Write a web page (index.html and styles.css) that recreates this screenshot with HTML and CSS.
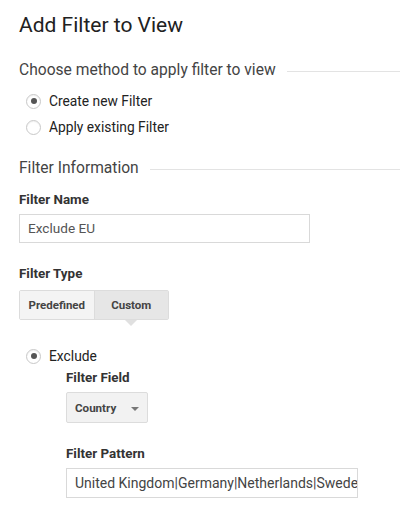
FILE: index.html
```html
<!DOCTYPE html>
<html>
<head>
<meta charset="utf-8">
<link rel="stylesheet" href="styles.css">
</head>
<body>
<div class="page">
  <h1 class="title">Add Filter to View</h1>

  <div class="section-head"><span>Choose method to apply filter to view</span><div class="rule"></div></div>
  <div class="radios">
    <label class="radio-row"><span class="radio checked"></span><span>Create new Filter</span></label>
    <label class="radio-row"><span class="radio"></span><span>Apply existing Filter</span></label>
  </div>

  <div class="section-head info"><span>Filter Information</span><div class="rule"></div></div>

  <div class="label first">Filter Name</div>
  <div class="input name">Exclude EU</div>

  <div class="label gap">Filter Type</div>
  <div class="tabs">
    <div class="tab">Predefined</div>
    <div class="tab active">Custom</div>
  </div>

  <div class="radios exclude">
    <label class="radio-row"><span class="radio checked"></span><span>Exclude</span></label>
  </div>
  <div class="sub">
    <div class="label tight">Filter Field</div>
    <div class="select"><span>Country</span><span class="caret"></span></div>
    <div class="label gap">Filter Pattern</div>
    <div class="input pattern"><span>United Kingdom|Germany|Netherlands|Sweden</span></div>
  </div>
</div>
</body>
</html>
```
FILE: styles.css
```css
html, body {
  margin: 0;
  padding: 0;
  background: #ffffff;
}
body {
  font-family: Roboto, "Liberation Sans", Arial, sans-serif;
  color: #222;
  width: 400px;
  height: 509px;
  overflow: hidden;
}
.page {
  padding: 13px 0 0 19px;
}
.title {
  margin: 0;
  font-size: 21px;
  line-height: 24px;
  font-weight: 400;
  color: #212121;
}
.section-head {
  display: flex;
  align-items: center;
  margin-top: 24px;
  font-size: 15.6px;
  line-height: 18px;
  color: #444;
}
.section-head.info {
  margin-top: 19px;
}
.section-head .rule {
  flex: 1;
  height: 1px;
  background: #e3e3e3;
  margin-left: 11px;
  margin-top: 2px;
}
.radios {
  margin-top: 9px;
  padding-left: 7px;
}
.radios.exclude {
  margin-top: 23px;
}
.radio-row {
  display: flex;
  align-items: center;
  height: 26px;
  font-size: 13.8px;
  color: #222;
}
.radio {
  box-sizing: border-box;
  width: 15px;
  height: 15px;
  border-radius: 50%;
  border: 1px solid #c8c8c8;
  background: #fff;
  box-shadow: inset 0 1px 1px rgba(0,0,0,0.06);
  margin-right: 8px;
  display: flex;
  align-items: center;
  justify-content: center;
}
.radio.checked::after {
  content: "";
  width: 6px;
  height: 6px;
  border-radius: 50%;
  background: #555;
}
.label {
  font-size: 13.4px;
  line-height: 16px;
  font-weight: 700;
  color: #333;
}
.label.first {
  margin-top: 15px;
}
.label.gap {
  margin-top: 23px;
}
.label.tight {
  margin-top: 1px;
}
.input {
  box-sizing: border-box;
  margin-top: 6px;
  height: 30px;
  border: 1px solid #d9d9d9;
  background: #fff;
  font-size: 13.6px;
  line-height: 28px;
  color: #555;
  padding: 0 9px 0 8px;
  overflow: hidden;
  white-space: nowrap;
}
.input.name {
  width: 291px;
  height: 29px;
  line-height: 27px;
}
.input.pattern {
  width: 292px;
  font-size: 14px;
  color: #444;
}
.tabs {
  display: flex;
  margin-top: 8px;
  width: 150px;
  height: 30px;
  box-sizing: border-box;
  border: 1px solid #dcdcdc;
  border-radius: 2px;
}
.tab {
  position: relative;
  flex: 1;
  display: flex;
  align-items: center;
  justify-content: center;
  font-size: 11.5px;
  font-weight: 700;
  color: #444;
  background: #f4f4f4;
}
.tab.active {
  background: #e6e6e6;
  border-left: 1px solid #dcdcdc;
}
.tab.active::after {
  content: "";
  position: absolute;
  left: 50%;
  bottom: -7px;
  margin-left: -6px;
  border-left: 6px solid transparent;
  border-right: 6px solid transparent;
  border-top: 6px solid #e0e0e0;
}
.sub {
  padding-left: 47px;
}
.select {
  box-sizing: border-box;
  margin-top: 6px;
  width: 82px;
  height: 31px;
  border: 1px solid #dcdcdc;
  border-radius: 2px;
  background: #f2f2f2;
  display: flex;
  align-items: center;
  padding-left: 8px;
  font-size: 11.6px;
  font-weight: 700;
  color: #444;
}
.caret {
  margin-left: 15px;
  margin-top: 2px;
  border-left: 4px solid transparent;
  border-right: 4px solid transparent;
  border-top: 4px solid #777;
}
```
